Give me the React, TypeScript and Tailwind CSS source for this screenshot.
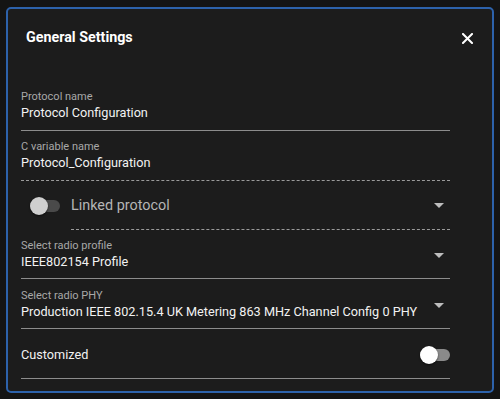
function Arrow() {
  return (
    <svg width="10" height="5" viewBox="0 0 10 5" className="shrink-0">
      <path d="M0 0 L10 0 L5 5 Z" fill="#bdbdbd" />
    </svg>
  );
}

function CloseIcon() {
  return (
    <svg width="11" height="11" viewBox="0 0 11 11" className="shrink-0">
      <path d="M1 1 L10 10 M10 1 L1 10" stroke="#ffffff" strokeWidth="2" strokeLinecap="square" />
    </svg>
  );
}

function Toggle({ on }: { on?: boolean }) {
  return (
    <div className="relative h-[18px] w-[30px] flex items-center">
      <div className={`h-3 w-[30px] rounded-full ${on ? 'bg-[#8a8a8a]' : 'bg-[#4a4a4a]'}`} />
      <div
        className={`absolute left-0 top-0 h-[18px] w-[18px] rounded-full shadow-[0_1px_2px_rgba(0,0,0,0.6)] ${
          on ? 'bg-white' : 'bg-[#cfcfcf]'
        }`}
      />
    </div>
  );
}

function TextField({ label, value, dashed, pt }: { label: string; value: string; dashed?: boolean; pt: string }) {
  return (
    <div className={`${pt} pb-2 border-b ${dashed ? 'border-dashed border-[#9a9a9a]' : 'border-[#8c8c8c]'}`}>
      <div className="text-[11px] leading-[14px] text-[#a8a8a8]">{label}</div>
      <div className="text-[12.7px] leading-[18px] text-[#f2f2f2]">{value}</div>
    </div>
  );
}

function SelectField({ label, value, pt, pb }: { label: string; value: string; pt: string; pb: string }) {
  return (
    <div className={`${pt} ${pb} border-b border-[#8c8c8c] flex items-center`}>
      <div className="flex-1 min-w-0">
        <div className="text-[11px] leading-[14px] text-[#a8a8a8]">{label}</div>
        <div className="text-[12.7px] leading-[18px] text-[#f2f2f2] whitespace-nowrap">{value}</div>
      </div>
      <div className="pr-[6px]">
        <Arrow />
      </div>
    </div>
  );
}

export default function App() {
  return (
    <div
      className="w-[500px] h-[399px] bg-[#141414] pt-[7px] px-[6px]"
      style={{ fontFamily: 'Roboto, "Liberation Sans", sans-serif' }}
    >
      <div className="h-[386px] rounded-[5px] border-2 border-[#2d62ab] bg-[#1c1c1c] pl-[13px] pr-[42px]">
        <div className="flex items-center h-[24px] mt-[17px] pl-[5px] -mr-[23px]">
          <div className="flex-1 text-[14.3px] font-bold text-white">General Settings</div>
          <CloseIcon />
        </div>

        <TextField label="Protocol name" value="Protocol Configuration" pt="pt-[40px]" />
        <TextField label="C variable name" value="Protocol_Configuration" pt="pt-[9px]" dashed />

        <div className="flex items-center">
          <div className="w-[50px] pl-[9px] flex items-center">
            <Toggle />
          </div>
          <div className="flex-1 h-[49px] border-b border-dashed border-[#9a9a9a] flex items-center">
            <div className="flex-1 text-[14.4px] pt-[1px] text-[#b5b5b5]">Linked protocol</div>
            <div className="pr-[6px]">
              <Arrow />
            </div>
          </div>
        </div>

        <SelectField label="Select radio profile" value="IEEE802154 Profile" pt="pt-[9px]" pb="pb-[7px]" />
        <SelectField
          label="Select radio PHY"
          value="Production IEEE 802.15.4 UK Metering 863 MHz Channel Config 0 PHY"
          pt="pt-[10px]"
          pb="pb-[7px]"
        />

        <div className="h-[50px] pt-[2px] border-b border-[#8c8c8c] flex items-center">
          <div className="flex-1 text-[12.7px] text-[#f2f2f2]">Customized</div>
          <Toggle on />
        </div>
      </div>
    </div>
  );
}
